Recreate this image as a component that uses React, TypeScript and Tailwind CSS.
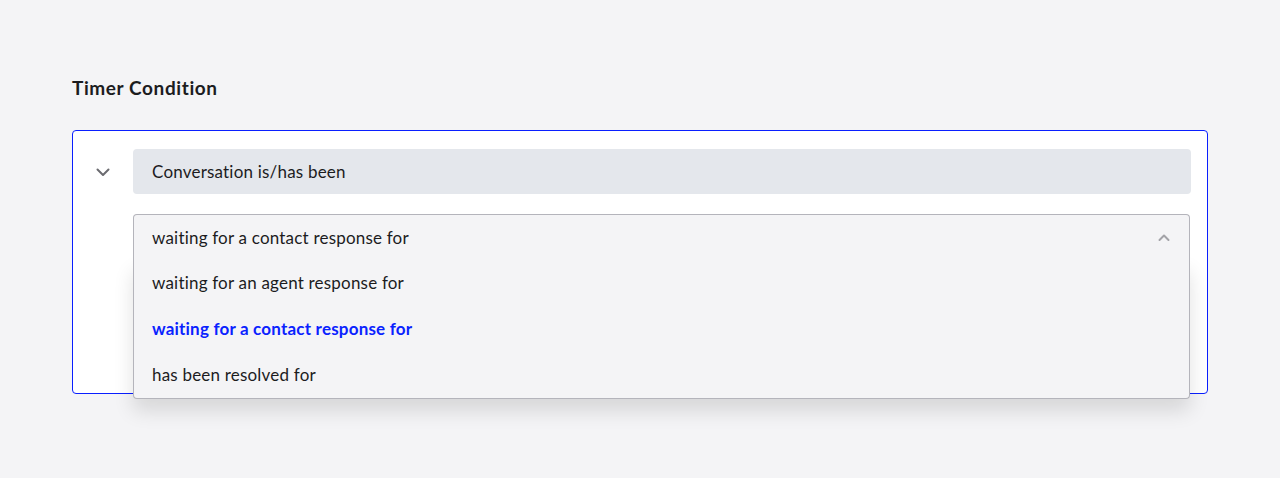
import React from 'react';

const options = [
  'waiting for an agent response for',
  'waiting for a contact response for',
  'has been resolved for',
];

const Chevron: React.FC<{ up?: boolean; className?: string }> = ({ up, className }) => (
  <svg width="16" height="16" viewBox="0 0 16 16" fill="none" className={className}>
    <path
      d={up ? 'M3.5 10L8 5.5L12.5 10' : 'M2.5 5.5L8 11L13.5 5.5'}
      stroke="currentColor"
      strokeWidth="2"
      strokeLinecap="round"
      strokeLinejoin="round"
    />
  </svg>
);

const App: React.FC = () => {
  const selected = 'waiting for a contact response for';

  return (
    <div
      className="min-h-[478px] bg-[#f4f4f6] px-[72px] pt-[75px] text-[#1c1c1e]"
      style={{ fontFamily: 'Lato, "Noto Sans", sans-serif' }}
    >
      <h2 className="text-[19px] font-bold leading-[26px] tracking-[0.6px]">Timer Condition</h2>

      {/* Condition card */}
      <div className="mt-[29px] h-[264px] rounded-[4px] border border-[#0a1fff] bg-white pt-[18px] pr-[16px]">
        <div className="flex items-center">
          <div className="flex w-[60px] justify-center">
            <Chevron className="text-[#6b6b70]" />
          </div>
          <div className="flex h-[45px] flex-1 items-center rounded-[4px] bg-[#e4e7ec] px-[19px] text-[17px] tracking-[0.2px]">
            Conversation is/has been
          </div>
        </div>

        <div className="relative mt-[20px] ml-[60px] mr-[1px]">
          {/* Select trigger */}
          <div className="relative z-20 flex h-[46px] items-center justify-between rounded-t-[4px] border border-b-0 border-[#b4b4bb] bg-[#f4f4f6] pl-[18px] pr-[17px] text-[17px] tracking-[0.2px]">
            <span>{selected}</span>
            <Chevron up className="text-[#a3a3a8]" />
          </div>
          {/* Open menu */}
          <div className="absolute left-0 right-0 top-[46px] z-10 rounded-b-[4px] border border-t-0 border-[#b4b4bb] bg-[#f4f4f6] shadow-[0_12px_20px_rgba(0,0,0,0.12)]">
            {options.map((o) => (
              <div
                key={o}
                className={`flex h-[46px] items-center pl-[18px] text-[17px] tracking-[0.2px] ${
                  o === selected ? 'font-bold text-[#0a22ff]' : ''
                }`}
              >
                {o}
              </div>
            ))}
          </div>
        </div>
      </div>
    </div>
  );
};

export default App;
